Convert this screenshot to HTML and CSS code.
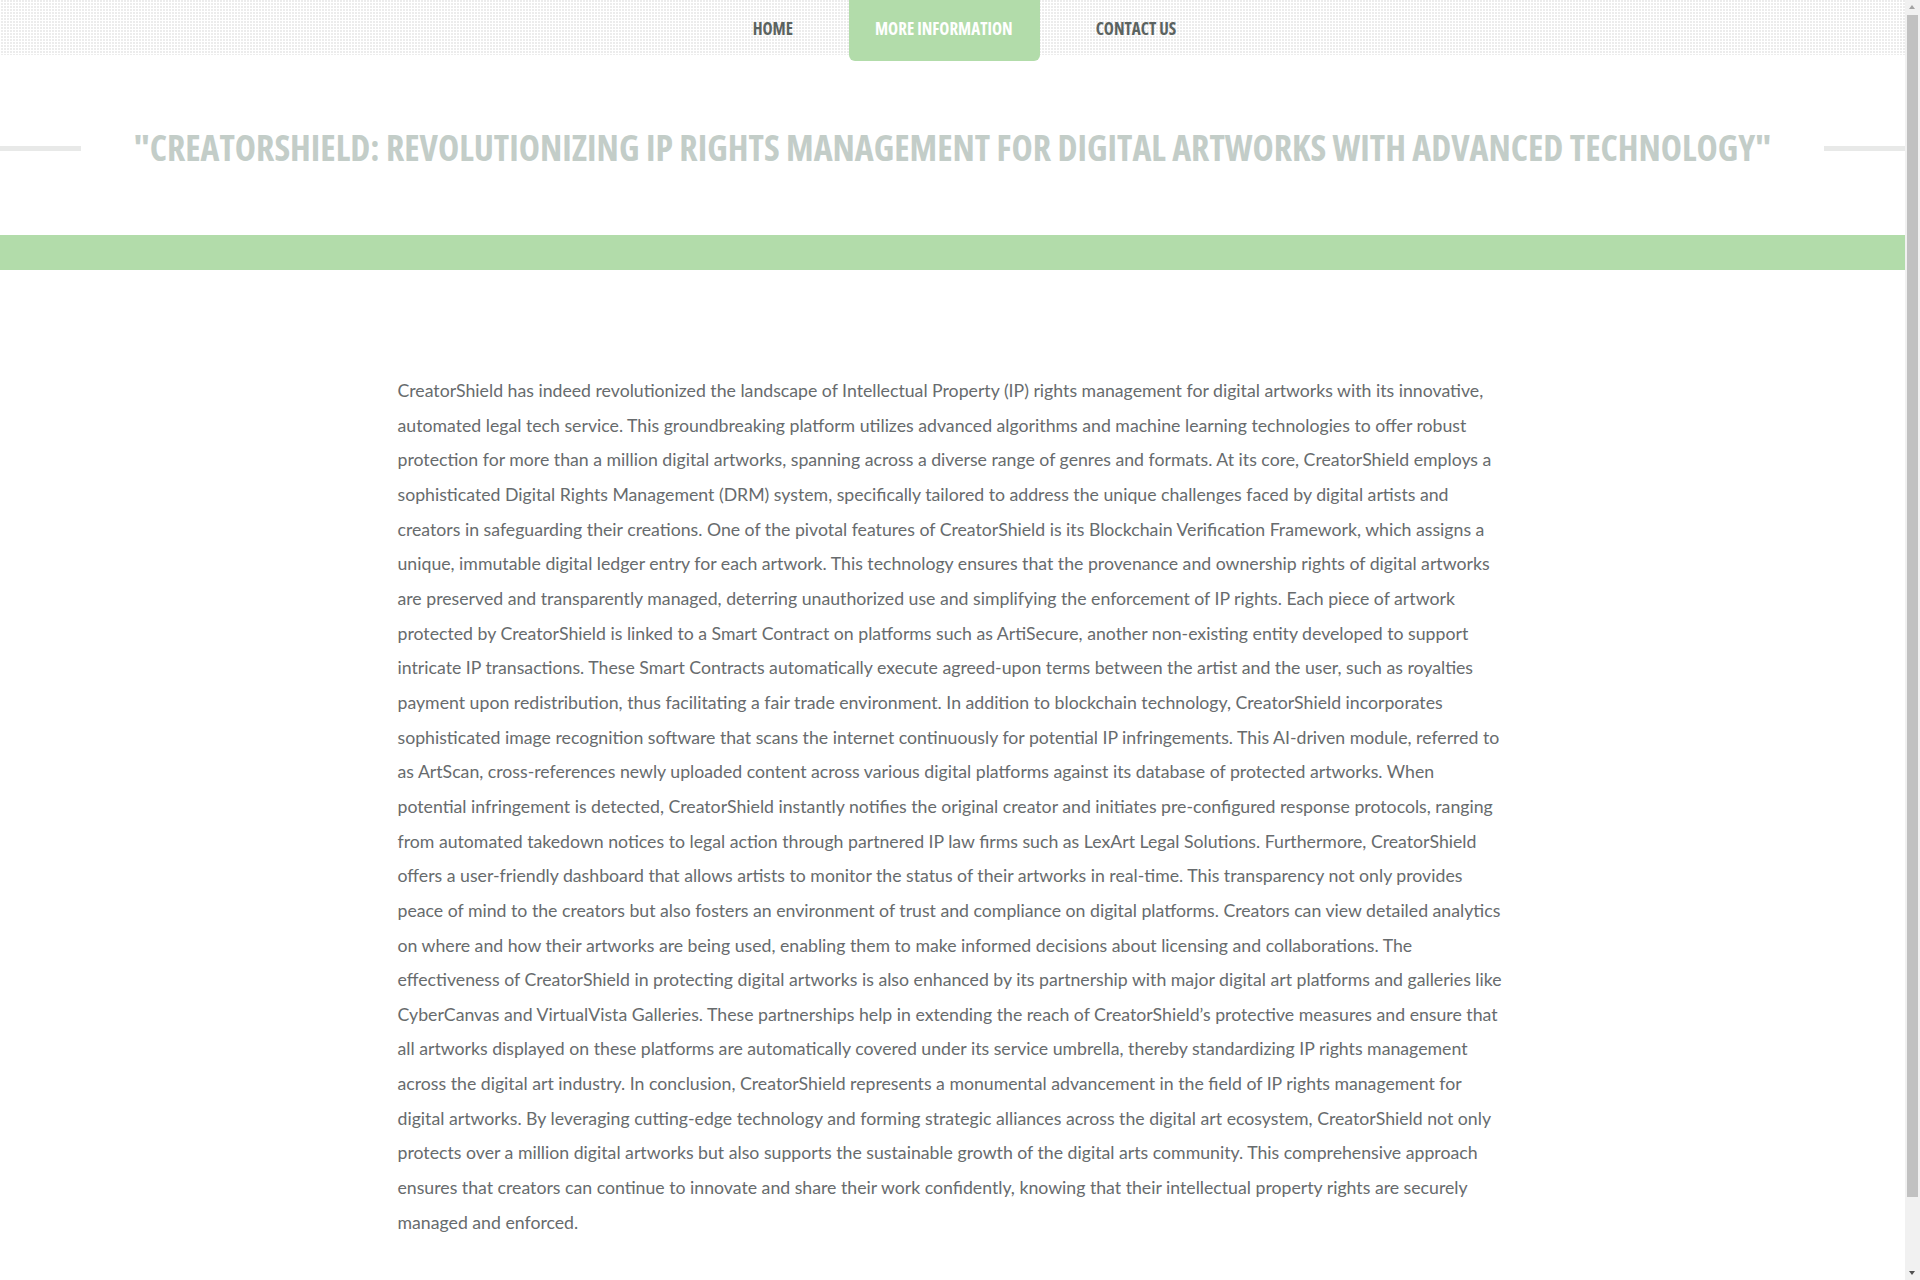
FILE: index.html
```html
<!DOCTYPE html>
<html lang="en">
<head>
<meta charset="utf-8">
<title>CreatorShield</title>
<link rel="stylesheet" href="styles.css">
</head>
<body>
<header class="topbar">
  <nav class="nav">
    <a class="nav-item" href="#">HOME</a>
    <a class="nav-item active" href="#">MORE INFORMATION</a>
    <a class="nav-item" href="#">CONTACT US</a>
  </nav>
</header>
<section class="hero">
  <span class="rule"></span>
  <h1 class="title">"CREATORSHIELD: REVOLUTIONIZING IP RIGHTS MANAGEMENT FOR DIGITAL ARTWORKS WITH ADVANCED TECHNOLOGY"</h1>
  <span class="rule"></span>
</section>
<div class="band"></div>
<main class="content">
  <p class="article">CreatorShield has indeed revolutionized the landscape of Intellectual Property (IP) rights management for digital artworks with its innovative, automated legal tech service. This groundbreaking platform utilizes advanced algorithms and machine learning technologies to offer robust protection for more than a million digital artworks, spanning across a diverse range of genres and formats. At its core, CreatorShield employs a sophisticated Digital Rights Management (DRM) system, specifically tailored to address the unique challenges faced by digital artists and creators in safeguarding their creations. One of the pivotal features of CreatorShield is its Blockchain Verification Framework, which assigns a unique, immutable digital ledger entry for each artwork. This technology ensures that the provenance and ownership rights of digital artworks are preserved and transparently managed, deterring unauthorized use and simplifying the enforcement of IP rights. Each piece of artwork protected by CreatorShield is linked to a Smart Contract on platforms such as ArtiSecure, another non-existing entity developed to support intricate IP transactions. These Smart Contracts automatically execute agreed-upon terms between the artist and the user, such as royalties payment upon redistribution, thus facilitating a fair trade environment. In addition to blockchain technology, CreatorShield incorporates sophisticated image recognition software that scans the internet continuously for potential IP infringements. This AI-driven module, referred to as ArtScan, cross-references newly uploaded content across various digital platforms against its database of protected artworks. When potential infringement is detected, CreatorShield instantly notifies the original creator and initiates pre-configured response protocols, ranging from automated takedown notices to legal action through partnered IP law firms such as LexArt Legal Solutions. Furthermore, CreatorShield offers a user-friendly dashboard that allows artists to monitor the status of their artworks in real-time. This transparency not only provides peace of mind to the creators but also fosters an environment of trust and compliance on digital platforms. Creators can view detailed analytics on where and how their artworks are being used, enabling them to make informed decisions about licensing and collaborations. The effectiveness of CreatorShield in protecting digital artworks is also enhanced by its partnership with major digital art platforms and galleries like CyberCanvas and VirtualVista Galleries. These partnerships help in extending the reach of CreatorShield’s protective measures and ensure that all artworks displayed on these platforms are automatically covered under its service umbrella, thereby standardizing IP rights management across the digital art industry. In conclusion, CreatorShield represents a monumental advancement in the field of IP rights management for digital artworks. By leveraging cutting-edge technology and forming strategic alliances across the digital art ecosystem, CreatorShield not only protects over a million digital artworks but also supports the sustainable growth of the digital arts community. This comprehensive approach ensures that creators can continue to innovate and share their work confidently, knowing that their intellectual property rights are securely managed and enforced.</p>
</main>
<div class="scrollbar" aria-hidden="true">
  <span class="sb-arrow sb-up"></span>
  <span class="sb-thumb"></span>
  <span class="sb-arrow sb-down"></span>
</div>
</body>
</html>
```
FILE: styles.css
```css
html, body {
  margin: 0;
  padding: 0;
  background: #ffffff;
}

body {
  font-family: "Lato", "Open Sans", sans-serif;
  margin-right: 15px;
}

.topbar {
  height: 55px;
  background-color: #ececec;
  background-image:
    linear-gradient(90deg, #ffffff 1px, transparent 1px),
    linear-gradient(0deg, #ffffff 1px, transparent 1px);
  background-size: 3px 3px;
}

.nav {
  display: flex;
  justify-content: center;
  gap: 30px;
  padding-left: 24px;
  height: 55px;
}

.nav-item {
  display: flex;
  align-items: center;
  height: 57px;
  padding: 0 26px 0 26px;
  font-family: "Open Sans", sans-serif;
  font-stretch: 75%;
  font-weight: 700;
  font-size: 17px;
  color: #5b6360;
  text-decoration: none;
  box-sizing: border-box;
}

.nav-item.active {
  height: 61px;
  padding: 0 27px 4px 26px;
  background: #b2dcaa;
  color: #ffffff;
  border-radius: 0 0 6px 6px;
}

.hero {
  display: flex;
  align-items: center;
  height: 180px;
}

.rule {
  flex: 1;
  height: 5px;
  background: #e8e9e8;
  margin-top: 6px;
}

.title {
  margin: 5px 53px 0;
  font-family: "Open Sans", sans-serif;
  font-stretch: 75%;
  font-weight: 700;
  font-size: 35.85px;
  line-height: 44px;
  color: #c3cdc8;
  white-space: nowrap;
}

.band {
  height: 35px;
  background: #b2dcaa;
}

.content {
  width: 1110px;
  margin: 0 auto;
  padding: 104px 0 148px;
}

.article {
  margin: 0;
  font-family: "Lato", sans-serif;
  font-size: 17.7px;
  line-height: 34.65px;
  color: #676b6d;
}

.scrollbar {
  position: fixed;
  top: 0;
  right: 0;
  width: 15px;
  height: 100vh;
  background: #f1f1f1;
  display: flex;
  flex-direction: column;
  align-items: center;
}

.sb-arrow {
  flex: 0 0 15px;
  width: 15px;
  position: relative;
}

.sb-arrow::after {
  content: "";
  position: absolute;
  left: 4px;
  width: 0;
  height: 0;
  border-left: 3.5px solid transparent;
  border-right: 3.5px solid transparent;
}

.sb-up::after {
  top: 5px;
  border-bottom: 4px solid #a3a3a3;
}

.sb-down::after {
  bottom: 5px;
  border-top: 4px solid #505050;
}

.sb-thumb {
  width: 11px;
  height: 1182px;
  background: #c1c1c1;
}

.scrollbar .sb-thumb + .sb-arrow {
  margin-top: auto;
}
```
